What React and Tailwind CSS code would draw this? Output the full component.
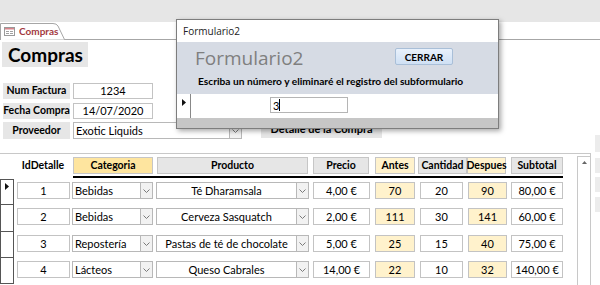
const ROWS = [
  { id: 1, cat: 'Bebidas', prod: 'Té Dharamsala', precio: '4,00 €', antes: 70, cant: 20, desp: 90, sub: '80,00 €', h: 'h-[26px]' },
  { id: 2, cat: 'Bebidas', prod: 'Cerveza Sasquatch', precio: '2,00 €', antes: 111, cant: 30, desp: 141, sub: '60,00 €', h: 'h-[27px]' },
  { id: 3, cat: 'Repostería', prod: 'Pastas de té de chocolate', precio: '5,00 €', antes: 25, cant: 15, desp: 40, sub: '75,00 €', h: 'h-[26px]' },
  { id: 4, cat: 'Lácteos', prod: 'Queso Cabrales', precio: '14,00 €', antes: 22, cant: 10, desp: 32, sub: '140,00 €', h: 'h-[26px]' },
]

function Chevron() {
  return (
    <svg width="7" height="4" viewBox="0 0 7 4">
      <polyline points="0.5,0.5 3.5,3.5 6.5,0.5" fill="none" stroke="#7a7a7a" strokeWidth="1" />
    </svg>
  )
}

function Arrow() {
  return (
    <svg width="4" height="7" viewBox="0 0 4 7">
      <polygon points="0,0 4,3.5 0,7" fill="#111" />
    </svg>
  )
}

function DropButton() {
  return (
    <div className="w-[12px] h-full flex items-center justify-center bg-[#f2f2f2] border-l border-[#b8b8b8]">
      <Chevron />
    </div>
  )
}

function Tab() {
  return (
    <div className="relative w-[66px] h-[18px] -mb-[1px]">
      <svg className="absolute inset-0" width="66" height="18" viewBox="0 0 66 18">
        <path d="M0.5 18 V1.5 H53 Q56.5 1.5 58 4 L64.5 17.5 H66" fill="#fff" stroke="#a6a6a6" strokeWidth="1" />
      </svg>
      <div className="relative flex items-center h-full pl-[4px] gap-[4px]">
        <svg width="11" height="9" viewBox="0 0 11 9">
          <rect x="0.5" y="0.5" width="10" height="8" fill="#fff" stroke="#9a9a9a" />
          <rect x="1" y="1" width="9" height="1.5" fill="#d9838a" />
          <rect x="2" y="4" width="3" height="1" fill="#a0a0a0" />
          <rect x="6" y="4" width="3" height="1" fill="#a0a0a0" />
          <rect x="2" y="6" width="3" height="1" fill="#a0a0a0" />
          <rect x="6" y="6" width="3" height="1" fill="#a0a0a0" />
        </svg>
        <span className="text-[10px] font-bold text-[#a33a3f] leading-none">Compras</span>
      </div>
    </div>
  )
}

function Field({ label, value, rowClass }) {
  return (
    <div className={`flex gap-[3px] ${rowClass}`}>
      <div className="w-[67px] h-full bg-[#e6e6e6] flex items-center justify-center text-[10.5px] font-bold whitespace-nowrap">{label}</div>
      <div className="w-[80px] h-full border border-[#c3c3c3] flex items-center justify-center text-[11px]">{value}</div>
    </div>
  )
}

function Header({ w, ml, bg, children }) {
  return (
    <div className={`${w} ${ml} ${bg} h-[17px] border border-[#c6c6c6] flex items-center justify-center text-[10.5px] font-bold leading-none whitespace-nowrap`}>
      {children}
    </div>
  )
}

function Cell({ w, ml, bg = 'bg-white', children }) {
  return (
    <div className={`${w} ${ml} ${bg} h-[17px] border border-[#c3c3c3] flex items-center justify-center text-[11px] leading-none`}>
      {children}
    </div>
  )
}

function Subform() {
  return (
    <div className="mt-[14px] w-[591px] h-[140px] border-t border-r border-[#c8c8c8] flex">
      <div className="w-[577px]">
        <div className="pt-[3px] flex">
          <div className="w-[70px] h-[17px] flex items-center justify-center text-[10.5px] font-bold pl-[16px]">IdDetalle</div>
          <Header w="w-[80px]" ml="ml-[3px]" bg="bg-[#fee59f]">Categoria</Header>
          <Header w="w-[151px]" ml="ml-[4px]" bg="bg-[#e6e6e6]">Producto</Header>
          <Header w="w-[56px]" ml="ml-[5px]" bg="bg-[#e6e6e6]">Precio</Header>
          <Header w="w-[40px]" ml="ml-[6px]" bg="bg-[#fff2cc]">Antes</Header>
          <Header w="w-[49px]" ml="ml-[3px]" bg="bg-[#e6e6e6]">Cantidad</Header>
          <Header w="w-[39px]" ml="ml-[0px]" bg="bg-[#fff2cc]">Despues</Header>
          <Header w="w-[52px]" ml="ml-[5px]" bg="bg-[#e6e6e6]">Subtotal</Header>
        </div>
        <div className="ml-[73px] mt-[2px] w-[490px] h-[2px] bg-black" />
        <div className="mt-[1px]">
          {ROWS.map((r, i) => (
            <div key={r.id} className={`flex ${r.h}`}>
              <div className={`w-[14px] h-full border-r border-b border-l border-[#555] ${i === 0 ? 'border-t' : ''} flex items-start justify-center pt-[3px]`}>
                {i === 0 && <Arrow />}
              </div>
              <div className="flex mt-[3px]">
                <Cell w="w-[53px]" ml="ml-[3px]">{r.id}</Cell>
                <div className="ml-[2px] w-[81px] h-[17px] border border-[#b8b8b8] flex">
                  <div className="flex-1 flex items-center pl-[2px] text-[11px] leading-none">{r.cat}</div>
                  <DropButton />
                </div>
                <div className="ml-[3px] w-[153px] h-[17px] border border-[#b8b8b8] flex">
                  <div className="flex-1 flex items-center justify-center text-[11px] leading-none">{r.prod}</div>
                  <DropButton />
                </div>
                <Cell w="w-[57px]" ml="ml-[4px]">{r.precio}</Cell>
                <Cell w="w-[40px]" ml="ml-[5px]" bg="bg-[#fff2cc]">{r.antes}</Cell>
                <Cell w="w-[43px]" ml="ml-[5px]">{r.cant}</Cell>
                <Cell w="w-[39px]" ml="ml-[5px]" bg="bg-[#fff2cc]">{r.desp}</Cell>
                <Cell w="w-[52px]" ml="ml-[4px]">{r.sub}</Cell>
              </div>
            </div>
          ))}
        </div>
      </div>
      <div className="w-[13px] border-l border-[#c8c8c8] mt-[2px] border-t">
        <div className="h-[11px] flex items-center justify-center">
          <svg width="5" height="3" viewBox="0 0 5 3">
            <polygon points="0,3 2.5,0 5,3" fill="#666" />
          </svg>
        </div>
      </div>
    </div>
  )
}

function Dialog() {
  return (
    <div className="absolute left-[176px] top-[19px] w-[323px] border border-[#7d7d7d] bg-white shadow-[2px_2px_5px_rgba(0,0,0,0.35)]">
      <div className="h-[22px] flex items-center pl-[6px] text-[10px] font-['Open_Sans',sans-serif] text-[#222]">Formulario2</div>
      <div className="h-[52px] bg-[#d6dbe4] flex flex-col">
        <div className="flex items-start">
          <div className="w-[200px] pl-[18px] pt-[3px] text-[19px] leading-[26px] text-[#7f7f7f] font-['Open_Sans',sans-serif]">Formulario2</div>
          <div className="ml-[18px] mt-[6px] w-[58px] h-[17px] rounded-[2px] border border-[#a9bfd8] bg-gradient-to-b from-[#e9f1fb] to-[#cfe0f4] flex items-center justify-center text-[10px] font-bold leading-none">CERRAR</div>
        </div>
        <div className="pl-[21px] mt-[5px] text-[10.2px] font-bold leading-none whitespace-nowrap">Escriba un número y eliminaré el registro del subformulario</div>
      </div>
      <div className="h-[24px] flex">
        <div className="w-[14px] h-full border-r border-[#888] flex items-start justify-center pt-[5px]">
          <Arrow />
        </div>
        <div className="ml-[79px] mt-[3px] w-[78px] h-[16px] border border-[#b5b5b5] flex items-center pl-[2px] text-[11px] leading-none">
          3<span className="w-px h-[12px] bg-black" />
        </div>
      </div>
      <div className="h-[10px] bg-[#c6c6c6]" />
    </div>
  )
}

export default function App() {
  return (
    <div className="relative w-[600px] h-[285px] overflow-hidden bg-white font-['Lato',sans-serif] text-black">
      <div className="h-[22px] bg-[#e6e6e6]" />
      <div className="h-[18px] border-b border-[#a6a6a6] flex items-end">
        <Tab />
      </div>
      <div className="flex">
        <div className="w-[595px]">
          <div className="ml-[2px] mt-[2px] w-[86px] h-[25px] bg-[#e6e6e6] flex items-center pl-[6px] text-[19px] font-bold leading-none">Compras</div>
          <div className="ml-[3px] mt-[16px]">
            <Field label="Num Factura" value="1234" rowClass="h-[16px]" />
            <Field label="Fecha Compra" value="14/07/2020" rowClass="h-[16px] mt-[4px]" />
            <div className="flex mt-[3px] h-[17px]">
              <div className="w-[67px] h-full bg-[#e6e6e6] flex items-center justify-center text-[10.5px] font-bold">Proveedor</div>
              <div className="ml-[3px] w-[169px] h-full border border-[#b8b8b8] flex">
                <div className="flex-1 flex items-center pl-[2px] text-[11px] leading-none">Exotic Liquids</div>
                <DropButton />
              </div>
              <div className="ml-[19px] -mt-[2px] w-[121px] h-[18px] bg-[#e6e6e6] flex items-center justify-center text-[11px] font-bold">Detalle de la Compra</div>
            </div>
          </div>
          <Subform />
        </div>
        <div className="w-[5px] flex flex-col">
          <div className="mt-[95px] h-[17px] bg-[#ececec]" />
          <div className="mt-[6px] h-[15px] bg-[#ececec]" />
          <div className="mt-[4px] h-[15px] bg-[#ececec]" />
          <div className="mt-[5px] h-[15px] bg-[#ececec]" />
        </div>
      </div>
      <Dialog />
    </div>
  )
}
